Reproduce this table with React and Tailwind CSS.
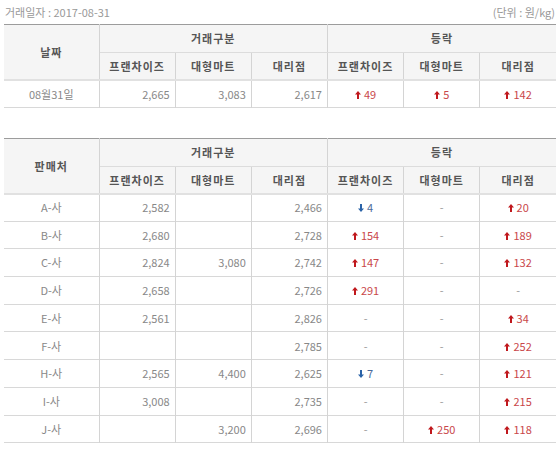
import React from 'react';

const FONT = { fontFamily: '"Noto Sans CJK KR", "Noto Sans", sans-serif' };

const top = { date: '08월31일', v: ['2,665', '3,083', '2,617'], d: ['+49', '+5', '+142'] };

const rows = [
  ['A-사', '2,582', '', '2,466', '-4', '', '+20'],
  ['B-사', '2,680', '', '2,728', '+154', '', '+189'],
  ['C-사', '2,824', '3,080', '2,742', '+147', '', '+132'],
  ['D-사', '2,658', '', '2,726', '+291', '', ''],
  ['E-사', '2,561', '', '2,826', '', '', '+34'],
  ['F-사', '', '', '2,785', '', '', '+252'],
  ['H-사', '2,565', '4,400', '2,625', '-7', '', '+121'],
  ['I-사', '3,008', '', '2,735', '', '', '+215'],
  ['J-사', '', '3,200', '2,696', '', '+250', '+118'],
];

function Up() {
  return (
    <svg width="6" height="8" viewBox="0 0 6 8" className="inline-block mr-[3px] -mt-[2px]">
      <path d="M3 0 L6 3.5 L4 3.5 L4 8 L2 8 L2 3.5 L0 3.5 Z" fill="#c0181d" />
    </svg>
  );
}

function Down() {
  return (
    <svg width="6" height="8" viewBox="0 0 6 8" className="inline-block mr-[3px] -mt-[2px]">
      <path d="M3 8 L6 4.5 L4 4.5 L4 0 L2 0 L2 4.5 L0 4.5 Z" fill="#2b63a8" />
    </svg>
  );
}

function Delta({ v }) {
  if (!v) return <span className="text-[#999]">-</span>;
  const n = v.slice(1);
  if (v[0] === '+') return <span className="text-[#c9474a]"><Up />{n}</span>;
  return <span className="text-[#4a6a99]"><Down />{n}</span>;
}

function Head({ first }) {
  return (
    <thead>
      <tr className="h-[28px] bg-[#f5f5f5] border-t border-[#9c9c9c]">
        <th rowSpan={2} className="w-[95px] font-semibold tracking-[1px] text-[#555] border-b-2 border-[#e1e1e1] border-r border-r-[#d4d4d4]">{first}</th>
        <th colSpan={3} className="font-semibold tracking-[1px] text-[#555] border-r border-[#d4d4d4] border-b border-b-[#dcdcdc]">거래구분</th>
        <th colSpan={3} className="font-semibold tracking-[1px] text-[#555] border-b border-[#dcdcdc]">등락</th>
      </tr>
      <tr className="h-[27px] bg-[#f5f5f5] border-b-2 border-[#e1e1e1]">
        {['프랜차이즈', '대형마트', '대리점', '프랜차이즈', '대형마트', '대리점'].map((t, i) => (
          <th key={i} className={`w-[76px] font-semibold tracking-[1px] text-[#555] ${i < 5 ? 'border-r border-[#d4d4d4]' : ''}`}>{t}</th>
        ))}
      </tr>
    </thead>
  );
}

export default function App() {
  return (
    <div className="w-[560px] h-[451px] bg-white overflow-hidden text-[11px] text-[#888]" style={FONT}>
      <div className="flex justify-between items-end h-[24px] pl-[5px] pr-[5px] pb-[4px] text-[#999]">
        <span>거래일자 : 2017-08-31</span>
        <span>(단위 : 원/kg)</span>
      </div>

      <table className="ml-[4px] w-[552px] border-collapse table-fixed">
        <Head first="날짜" />
        <tbody>
          <tr className="h-[28px] border-b border-[#d8d8d8]">
            <td className="text-center border-r border-[#d4d4d4]">{top.date}</td>
            {top.v.map((v, i) => (
              <td key={i} className="text-right pr-[5px] border-r border-[#d4d4d4]">{v}</td>
            ))}
            {top.d.map((v, i) => (
              <td key={i} className={`text-center ${i < 2 ? 'border-r border-[#d4d4d4]' : ''}`}><Delta v={v} /></td>
            ))}
          </tr>
        </tbody>
      </table>

      <div className="h-[30px]" />

      <table className="ml-[4px] w-[552px] border-collapse table-fixed">
        <Head first="판매처" />
        <tbody>
          {rows.map((r, ri) => (
            <tr key={ri} className="h-[27.7px] border-b border-[#d8d8d8]">
              <td className="text-center border-r border-[#d4d4d4]">{r[0]}</td>
              {r.slice(1, 4).map((v, i) => (
                <td key={i} className="text-right pr-[5px] border-r border-[#d4d4d4]">{v}</td>
              ))}
              {r.slice(4).map((v, i) => (
                <td key={i} className={`text-center ${i < 2 ? 'border-r border-[#d4d4d4]' : ''}`}><Delta v={v} /></td>
              ))}
            </tr>
          ))}
        </tbody>
      </table>
    </div>
  );
}
